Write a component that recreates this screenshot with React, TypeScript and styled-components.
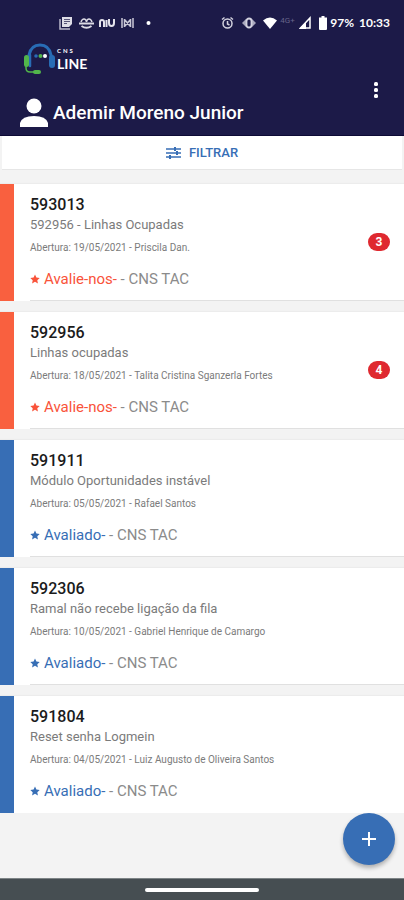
import React from "react";
import styled, { createGlobalStyle } from "styled-components";

const GlobalStyle = createGlobalStyle`
  * { box-sizing: border-box; }
  body {
    margin: 0;
    background: #f3f3f3;
    font-family: Roboto, "Liberation Sans", sans-serif;
  }
  button { font-family: inherit; border: 0; cursor: pointer; }
`;

const navy = "#1c1a48";
const blue = "#376eb5";
const orange = "#f9603f";

const Screen = styled.div`
  position: relative;
  display: flex;
  flex-direction: column;
  min-height: 100vh;
`;

const Header = styled.header`
  display: flex;
  flex-direction: column;
  background: ${navy};
  color: #fff;
  border-bottom: 1px solid #0d0a35;
`;

const StatusBar = styled.div`
  display: flex;
  justify-content: space-between;
  align-items: center;
  height: 20px;
  margin-top: 13px;
  padding: 0 14px 0 59px;
`;

const StatusGroup = styled.div`
  display: flex;
  align-items: center;
`;

const StatusIcon = styled.svg<{ $w: number; $gap: number }>`
  flex: none;
  width: ${(p) => p.$w}px;
  height: 14px;
  margin-right: ${(p) => p.$gap}px;
`;

const Network = styled.span`
  width: 16px;
  margin: 0 3px 4px 0;
  color: #66648a;
  font-size: 8px;
  line-height: 10px;
`;

const StatusTexts = styled.div`
  display: flex;
  gap: 5px;
  font: 700 12px/20px Lato, sans-serif;
  white-space: nowrap;
`;

const Brand = styled.div`
  display: flex;
  height: 36px;
  margin-top: 9px;
  padding-left: 23px;
`;

const BrandMark = styled.svg`
  width: 33px;
  height: 34px;
`;

const BrandText = styled.div`
  display: flex;
  flex-direction: column;
  padding: 5px 0 0 1px;
  font-family: Lato, sans-serif;
  font-weight: 700;
`;

const BrandSmall = styled.span`
  font-size: 6px;
  line-height: 8px;
  letter-spacing: 2px;
`;

const BrandLarge = styled.span`
  font-size: 14px;
  line-height: 17px;
`;

const UserRow = styled.div`
  display: flex;
  align-items: flex-end;
  justify-content: space-between;
  height: 57px;
  padding: 0 16px 7px 20px;
`;

const User = styled.div`
  display: flex;
  align-items: center;
  gap: 5px;
`;

const Avatar = styled.svg`
  width: 28px;
  height: 30px;
`;

const UserName = styled.h1`
  margin: 0;
  font-size: 19px;
  font-weight: 500;
  line-height: 28px;
`;

const MenuButton = styled.button`
  align-self: flex-start;
  display: flex;
  justify-content: center;
  width: 24px;
  padding: 4px 0;
  background: none;
  color: #fff;
`;

const FilterButton = styled.button`
  display: flex;
  align-items: center;
  justify-content: center;
  gap: 8px;
  height: 34px;
  margin: 0 2px;
  padding: 0;
  background: #fff;
  border-bottom: 1px solid #e6e6e6;
  color: ${blue};
  font-size: 13px;
  font-weight: 500;
`;

const TicketList = styled.main`
  display: flex;
  flex-direction: column;
  gap: 11px;
  margin-top: 14px;
`;

const Ticket = styled.article<{ $rated: boolean }>`
  display: flex;
  height: 117px;
  border-left: 14px solid ${(p) => (p.$rated ? blue : orange)};
  background: #fff;
  box-shadow: 0 -1px 1px #ececec;
`;

const TicketBody = styled.div`
  display: flex;
  flex: 1;
  align-items: center;
  justify-content: space-between;
  margin-left: 16px;
  padding-right: 14px;
  border-bottom: 1px solid #e0e0e0;

  ${Ticket}:last-child & { border-bottom-color: transparent; }
`;

const TicketText = styled.div`
  display: flex;
  flex-direction: column;
`;

const Code = styled.h2`
  margin: 0;
  color: #1b1b1b;
  font-size: 16px;
  font-weight: 500;
  line-height: 20px;
`;

const Subject = styled.p`
  margin: 0;
  color: #7b7b7b;
  font-size: 13px;
  line-height: 20px;
`;

const Opened = styled.p`
  margin: 4px 0 0;
  color: #7b7b7b;
  font-size: 10px;
  line-height: 18px;
`;

const Rating = styled.p`
  display: flex;
  align-items: center;
  margin: 12px 0 0;
  color: #8b8b8b;
  font-size: 15px;
  line-height: 20px;
  white-space: pre;
`;

const Star = styled.svg<{ $rated: boolean }>`
  width: 10px;
  height: 10px;
  margin-right: 4px;
  fill: ${(p) => (p.$rated ? blue : "#f9533a")};
`;

const RatingLink = styled.a<{ $rated: boolean }>`
  color: ${(p) => (p.$rated ? blue : "#f9533a")};
  text-decoration: none;
`;

const Badge = styled.span`
  width: 22px;
  height: 18px;
  border-radius: 9px;
  background: #df2930;
  color: #fff;
  font-size: 12px;
  font-weight: 700;
  line-height: 18px;
  text-align: center;
`;

const AddButton = styled.button`
  position: absolute;
  right: 9px;
  bottom: 35px;
  display: flex;
  align-items: center;
  justify-content: center;
  width: 52px;
  height: 52px;
  padding: 0;
  border-radius: 50%;
  background: ${blue};
  color: #fff;
  box-shadow: 0 3px 4px rgba(0, 0, 0, 0.28);
`;

const GestureBar = styled.footer`
  display: flex;
  justify-content: center;
  align-items: center;
  height: 22px;
  margin-top: auto;
  border-top: 1px solid #7d8486;
  background: #464e52;
`;

const GestureHandle = styled.div`
  width: 28%;
  height: 4px;
  border-radius: 2px;
  background: #fff;
`;

interface TicketData {
  code: string;
  subject: string;
  opened: string;
  rated: boolean;
  unread?: number;
}

const tickets: TicketData[] = [
  { code: "593013", subject: "592956 - Linhas Ocupadas", opened: "19/05/2021 - Priscila Dan.", rated: false, unread: 3 },
  { code: "592956", subject: "Linhas ocupadas", opened: "18/05/2021 - Talita Cristina Sganzerla Fortes", rated: false, unread: 4 },
  { code: "591911", subject: "Módulo Oportunidades instável", opened: "05/05/2021 - Rafael Santos", rated: true },
  { code: "592306", subject: "Ramal não recebe ligação da fila", opened: "10/05/2021 - Gabriel Henrique de Camargo", rated: true },
  { code: "591804", subject: "Reset senha Logmein", opened: "04/05/2021 - Luiz Augusto de Oliveira Santos", rated: true },
];

const Notifications = () => (
  <StatusGroup>
    <StatusIcon $w={13} $gap={7} viewBox="0 0 13 14">
      <path d="M1 3v10h10" fill="none" stroke="#b9b8ca" strokeWidth="1.5" />
      <path d="M3 1h10v7l-3 3H3z" fill="#dddce6" />
      <path d="M5 3.5h6M5 5.5h6M5 7.5h3" stroke={navy} strokeWidth="0.7" />
    </StatusIcon>
    <StatusIcon $w={15} $gap={5} viewBox="0 0 15 14" fill="none" stroke="#dddce6">
      <path d="M0 7.500h15M2.500 10q5 3.500 10 0" strokeWidth="2" />
      <path d="M2 6q1-3 3-3t2.500 3q.5-3 2.500-3t3 3" strokeWidth="1.500" />
    </StatusIcon>
    <StatusIcon $w={16} $gap={6} viewBox="0 0 16 14" fill="none" stroke="#e4e3ec" strokeWidth="2">
      <path d="M1 11V6q0-2 2-2t2 2v5M7.500 11V4M10 3v4q0 3 2.500 3T15 7V3" />
    </StatusIcon>
    <StatusIcon $w={13} $gap={12} viewBox="0 0 13 14" fill="none" stroke="#c9c8d6" strokeWidth="1.500">
      <path d="M1 2v10M12 2v10M3.500 3v8M9.500 3v8M4 4l5 6M9 4l-5 6" />
    </StatusIcon>
    <StatusIcon $w={5} $gap={0} viewBox="0 0 5 14">
      <circle cx="2.500" cy="7" r="2" fill="#fff" />
    </StatusIcon>
  </StatusGroup>
);

const SystemStatus = () => (
  <StatusGroup>
    <StatusIcon $w={13} $gap={8} viewBox="0 0 13 14" fill="none" stroke="#d3d2df" strokeWidth="1.500">
      <circle cx="6.500" cy="7.500" r="4.500" />
      <path d="M6.500 5v3l2 1M1 3.500L3.500 1.500M12 3.500L9.500 1.500" />
    </StatusIcon>
    <StatusIcon $w={14} $gap={7} viewBox="0 0 14 14">
      <path d="M0 7l4-4v8zM14 7l-4-4v8z" fill="#a9a8bd" />
      <rect x="4.500" y="2.500" width="5" height="9" rx="2.500" fill="none" stroke="#d3d2df" strokeWidth="1.800" />
    </StatusIcon>
    <StatusIcon $w={14} $gap={3} viewBox="0 0 14 14">
      <path d="M0 4.500Q7-1.500 14 4.500L7 13z" fill="#fff" />
    </StatusIcon>
    <Network>4G+</Network>
    <StatusIcon $w={12} $gap={8} viewBox="0 0 12 14">
      <path d="M11 2v10H1.500z" fill="none" stroke="#fff" strokeWidth="1.500" />
      <path d="M0 13L7 6v7z" fill="#fff" />
    </StatusIcon>
    <StatusIcon $w={8} $gap={3} viewBox="0 0 8 14">
      <path d="M2.500 0h3v1.500H8V13q0 1-1 1H1q-1 0-1-1V1.500h2.500z" fill="#fff" />
    </StatusIcon>
    <StatusTexts>
      <span>97%</span>
      <span>10:33</span>
    </StatusTexts>
  </StatusGroup>
);

const Headset = () => (
  <BrandMark viewBox="0 0 33 34" fill="none" strokeLinecap="round">
    <path d="M6 14v-1Q8 3 17 3t11 10v2" stroke="#286cb5" strokeWidth="3" />
    <rect x="26" y="13" width="6" height="13" rx="3" fill="#286cb5" />
    <path d="M7 13v11" stroke="#286cb5" strokeWidth="2.500" />
    <rect x="1" y="13" width="5" height="12" rx="2.500" fill="#52b54b" />
    <path d="M3 22v4q0 4 4 4h6" stroke="#52b54b" strokeWidth="1.500" />
    <rect x="10" y="28" width="8" height="4" rx="2" fill="#52b54b" />
    <circle cx="13" cy="14" r="1.800" fill="#286cb5" />
    <circle cx="17.500" cy="14" r="2" fill="#52b54b" />
    <circle cx="22" cy="14" r="2" fill="#fff" />
  </BrandMark>
);

export default function App() {
  return (
    <Screen>
      <GlobalStyle />
      <Header>
        <StatusBar>
          <Notifications />
          <SystemStatus />
        </StatusBar>
        <Brand>
          <Headset />
          <BrandText>
            <BrandSmall>CNS</BrandSmall>
            <BrandLarge>LINE</BrandLarge>
          </BrandText>
        </Brand>
        <UserRow>
          <User>
            <Avatar viewBox="0 0 28 30" fill="#fff">
              <circle cx="14" cy="8" r="7.500" />
              <path d="M0 29v-4Q2 18 14 18t14 7v4z" />
            </Avatar>
            <UserName>Ademir Moreno Junior</UserName>
          </User>
          <MenuButton aria-label="Menu">
            <svg width="4" height="16" viewBox="0 0 4 16" fill="currentColor">
              <rect y="0" width="4" height="4" rx="1.500" />
              <rect y="6" width="4" height="4" rx="1.500" />
              <rect y="12" width="4" height="4" rx="1.500" />
            </svg>
          </MenuButton>
        </UserRow>
      </Header>
      <FilterButton>
        <svg width="15" height="12" viewBox="0 0 15 12" fill="none" stroke="currentColor">
          <path d="M0 2h15M0 6h15M0 10h15" strokeWidth="1.500" />
          <path d="M9 0v4M11 4v4M4 8v4" strokeWidth="2" />
        </svg>
        FILTRAR
      </FilterButton>
      <TicketList>
        {tickets.map((t) => (
          <Ticket key={t.code} $rated={t.rated}>
            <TicketBody>
              <TicketText>
                <Code>{t.code}</Code>
                <Subject>{t.subject}</Subject>
                <Opened>Abertura: {t.opened}</Opened>
                <Rating>
                  <Star $rated={t.rated} viewBox="0 0 24 24">
                    <path d="M12 1l3.400 7.300 7.900 1-5.800 5.500 1.500 7.900-7-3.900-7 3.900 1.500-7.900L.7 9.300l7.900-1z" />
                  </Star>
                  <RatingLink href="#" $rated={t.rated}>{t.rated ? "Avaliado" : "Avalie-nos"}-</RatingLink>
                  {" - CNS TAC"}
                </Rating>
              </TicketText>
              {t.unread && <Badge>{t.unread}</Badge>}
            </TicketBody>
          </Ticket>
        ))}
      </TicketList>
      <GestureBar>
        <GestureHandle />
      </GestureBar>
      <AddButton aria-label="Adicionar">
        <svg width="14" height="14" viewBox="0 0 14 14" stroke="currentColor" strokeWidth="2">
          <path d="M7 0v14M0 7h14" />
        </svg>
      </AddButton>
    </Screen>
  );
}
